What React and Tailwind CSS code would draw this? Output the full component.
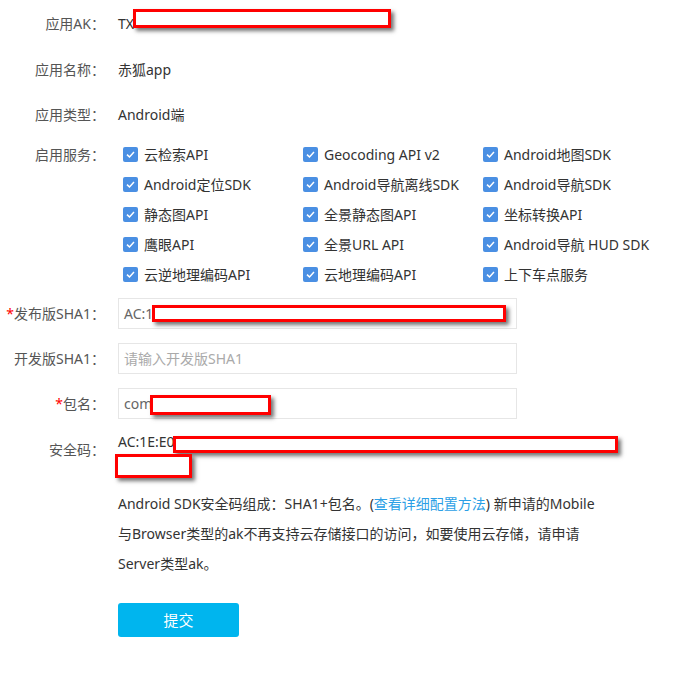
import React from 'react';

const services = [
  '云检索API', 'Geocoding API v2', 'Android地图SDK',
  'Android定位SDK', 'Android导航离线SDK', 'Android导航SDK',
  '静态图API', '全景静态图API', '坐标转换API',
  '鹰眼API', '全景URL API', 'Android导航 HUD SDK',
  '云逆地理编码API', '云地理编码API', '上下车点服务',
];

// redaction box drawn over the screenshot values
function Redact({ className }) {
  return (
    <span
      className={`absolute bg-white border-[3px] border-[#f00] shadow-[3px_3px_4px_rgba(0,0,0,0.55)] ${className}`}
    />
  );
}

function Check() {
  return (
    <svg width="15" height="15" viewBox="0 0 15 15" className="shrink-0">
      <rect x="0" y="0" width="15" height="15" rx="2" fill="#4a8fe3" />
      <path d="M4 7.6 L6.5 10 L11 5" fill="none" stroke="#fff" strokeWidth="1.5" />
    </svg>
  );
}

function Label({ children, required }) {
  return (
    <div className="w-[105px] shrink-0 text-right text-[#555] whitespace-nowrap">
      {required && <span className="text-[#f00]">*</span>}
      {children}：
    </div>
  );
}

export default function App() {
  return (
    <div className="min-h-[673px] bg-white text-[14px] text-[#333] font-['Noto_Sans','Noto_Sans_CJK_SC',sans-serif]">
      <div className="pt-2">
        {/* AK */}
        <div className="flex h-[30px] items-center gap-[13px]">
          <Label>应用AK</Label>
          <div className="relative">
            TX
            <Redact className="left-[15px] top-[-4px] w-[258px] h-[19px]" />
          </div>
        </div>

        <div className="mt-4 flex h-[30px] items-center gap-[13px]">
          <Label>应用名称</Label>
          <div>赤狐app</div>
        </div>

        <div className="mt-[15px] flex h-[30px] items-center gap-[13px]">
          <Label>应用类型</Label>
          <div>Android端</div>
        </div>

        {/* services */}
        <div className="mt-[10px] flex gap-[13px]">
          <div className="flex h-[30px] items-center">
            <Label>启用服务</Label>
          </div>
          <div className="ml-[5px] grid grid-cols-[180px_180px_180px]">
            {services.map((s) => (
              <div key={s} className="flex h-[30px] items-center gap-[6px] whitespace-nowrap">
                <Check />
                <span>{s}</span>
              </div>
            ))}
          </div>
        </div>

        {/* release SHA1 */}
        <div className="mt-[9px] flex items-center gap-[13px]">
          <Label required>发布版SHA1</Label>
          <div className="relative flex h-[31px] w-[399px] items-center border border-[#e6e6e6] px-[5px] text-[#666]">
            AC:1
            <Redact className="left-[33px] top-[6px] w-[354px] h-[17px]" />
          </div>
        </div>

        <div className="mt-[14px] flex items-center gap-[13px]">
          <Label>开发版SHA1</Label>
          <div className="flex h-[31px] w-[399px] items-center border border-[#e6e6e6] px-[5px] text-[#aaa]">
            请输入开发版SHA1
          </div>
        </div>

        <div className="mt-[14px] flex items-center gap-[13px]">
          <Label required>包名</Label>
          <div className="relative flex h-[31px] w-[399px] items-center border border-[#e6e6e6] px-[5px] text-[#666]">
            com
            <Redact className="left-[31px] top-[6px] w-[121px] h-[20px]" />
          </div>
        </div>

        {/* security code */}
        <div className="mt-[12px] flex gap-[13px]">
          <div className="pt-2 leading-[22px]">
            <Label>安全码</Label>
          </div>
          <div className="relative h-[44px] leading-[22px]">
            AC:1E:E0
            <Redact className="left-[55px] top-[5px] w-[445px] h-[17px]" />
            <Redact className="left-[-3px] top-[23px] w-[77px] h-[24px]" />
          </div>
        </div>

        <div className="ml-[118px] mt-[14px] leading-[30px] whitespace-nowrap">
          Android SDK安全码组成：SHA1+包名。(<span className="text-[#2b9fe6]">查看详细配置方法</span>) 新申请的Mobile
          <br />
          与Browser类型的ak不再支持云存储接口的访问，如要使用云存储，请申请
          <br />
          Server类型ak。
        </div>

        <div className="ml-[118px] mt-[24px]">
          <button className="h-[34px] w-[121px] rounded-[3px] bg-[#00b5ee] text-[15px] text-white">
            提交
          </button>
        </div>
      </div>
    </div>
  );
}
